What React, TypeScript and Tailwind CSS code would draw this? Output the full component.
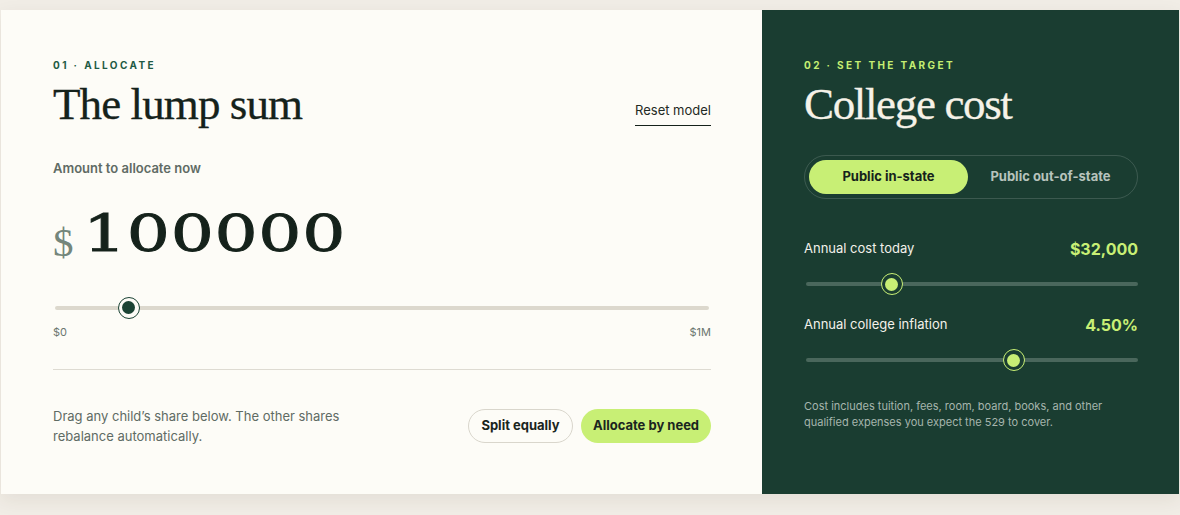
import React from "react";

const sans = "font-['Inter','Liberation_Sans',sans-serif]";
const serif = "font-['Liberation_Serif','Times_New_Roman',serif]";

type SliderProps = {
  percent: number;
  dark?: boolean;
};

function Slider({ percent, dark }: SliderProps) {
  return (
    <div className="relative h-[22px] flex items-center">
      <div
        className={`h-[4px] w-full rounded-full ${dark ? "bg-[#4a675c]" : "bg-[#dcd8cd]"}`}
      />
      <div
        className={`absolute top-0 -ml-[11px] flex h-[22px] w-[22px] items-center justify-center rounded-full border-[1.5px] ${
          dark ? "border-[#c8ef75] bg-[#1a3d31]" : "border-[#1b4334] bg-[#fdfcf7]"
        }`}
        style={{ left: `${percent}%` }}
      >
        <div
          className={`h-[13px] w-[13px] rounded-full ${dark ? "bg-[#c8ef75]" : "bg-[#1b4334]"}`}
        />
      </div>
    </div>
  );
}

export default function App() {
  return (
    <div className={`min-h-screen bg-[#f1ede6] pt-[10px] px-[1px] pb-[22px] ${sans}`}>
      <div className="flex shadow-[0_6px_18px_rgba(60,50,30,0.08)]">
        {/* allocation panel */}
        <section className="w-[761px] shrink-0 bg-[#fdfcf7] pl-[52px] pr-[51px] pt-[49px] pb-[48px]">
          <div className="flex items-end justify-between">
            <div>
              <p className="text-[10px] font-bold tracking-[0.24em] text-[#1f5a44] leading-[12px]">
                01 · ALLOCATE
              </p>
              <h1
                className={`${serif} mt-[9px] text-[45px] leading-[48px] tracking-[-0.02em] text-[#15221b] [-webkit-text-stroke:0.3px_#15221b]`}
              >
                The lump sum
              </h1>
            </div>
            <button className="mb-[2px] border-b border-[#15221b] pb-[5px] text-[13px] text-[#1f2a24]">
              Reset model
            </button>
          </div>

          <p className="mt-[31px] text-[13px] font-semibold text-[#5f6b64]">
            Amount to allocate now
          </p>

          <div className="mt-[24px] flex h-[56px] items-end gap-[9px] leading-none">
            <span className={`${serif} mb-[-4px] text-[41px] text-[#74867b]`}>$</span>
            {/* wide display digits: regular face stretched horizontally */}
            <span
              className={`font-['DejaVu_Serif',serif] inline-block origin-left scale-x-[1.33] text-[51px] tracking-[0.01em] text-[#15221b] [-webkit-text-stroke:0.9px_#15221b]`}
            >
              100000
            </span>
          </div>

          <div className="mt-[38px] px-[2px]">
            <Slider percent={11.3} />
          </div>
          <div className="mt-[5px] flex justify-between text-[11px] text-[#6b766f]">
            <span>$0</span>
            <span>$1M</span>
          </div>

          <div className="mt-[29px] h-px bg-[#dedbd2]" />

          <div className="mt-[36px] flex items-center justify-between">
            <p className="w-[300px] text-[13px] leading-[20px] text-[#5f6b64]">
              Drag any child’s share below. The other shares rebalance automatically.
            </p>
            <div className="flex gap-[8px]">
              <button className="h-[34px] w-[105px] rounded-full border border-[#d9d6cc] text-[13px] font-bold text-[#1a2520]">
                Split equally
              </button>
              <button className="h-[34px] w-[130px] rounded-full bg-[#c8ef75] text-[13px] font-bold text-[#1a2520]">
                Allocate by need
              </button>
            </div>
          </div>
        </section>

        {/* target panel */}
        <section className="flex-1 bg-[#1a3d31] pl-[42px] pr-[41px] pt-[49px]">
          <p className="text-[10px] font-bold tracking-[0.24em] text-[#c5ee72] leading-[12px]">
            02 · SET THE TARGET
          </p>
          <h2
            className={`${serif} mt-[9px] text-[45px] leading-[48px] tracking-[-0.03em] text-[#f6f2e8] [-webkit-text-stroke:0.3px_#f6f2e8]`}
          >
            College cost
          </h2>

          <div className="mt-[27px] flex h-[44px] items-center rounded-full border border-white/15 p-[4px]">
            <div className="flex h-full w-[159px] items-center justify-center rounded-full bg-[#c8ef75] text-[13px] font-bold text-[#15221b]">
              Public in-state
            </div>
            <div className="flex flex-1 items-center justify-center text-[13px] font-bold text-[#b7c3bc]">
              Public out-of-state
            </div>
          </div>

          <div className="mt-[38px] flex items-center justify-between">
            <span className="text-[13px] text-[#f3f1ea]">Annual cost today</span>
            <span className="text-[16px] font-bold text-[#c8ef75]">$32,000</span>
          </div>
          <div className="mt-[12px] pl-[2px]">
            <Slider percent={25.9} dark />
          </div>

          <div className="mt-[18px] flex items-center justify-between">
            <span className="text-[13px] text-[#f3f1ea]">Annual college inflation</span>
            <span className="text-[16px] font-bold text-[#c8ef75]">4.50%</span>
          </div>
          <div className="mt-[12px] pl-[2px]">
            <Slider percent={62.6} dark />
          </div>

          <p className="mt-[27px] text-[11px] leading-[16px] text-[#a6b5ad]">
            Cost includes tuition, fees, room, board, books, and other qualified expenses you
            expect the 529 to cover.
          </p>
        </section>
      </div>
    </div>
  );
}
